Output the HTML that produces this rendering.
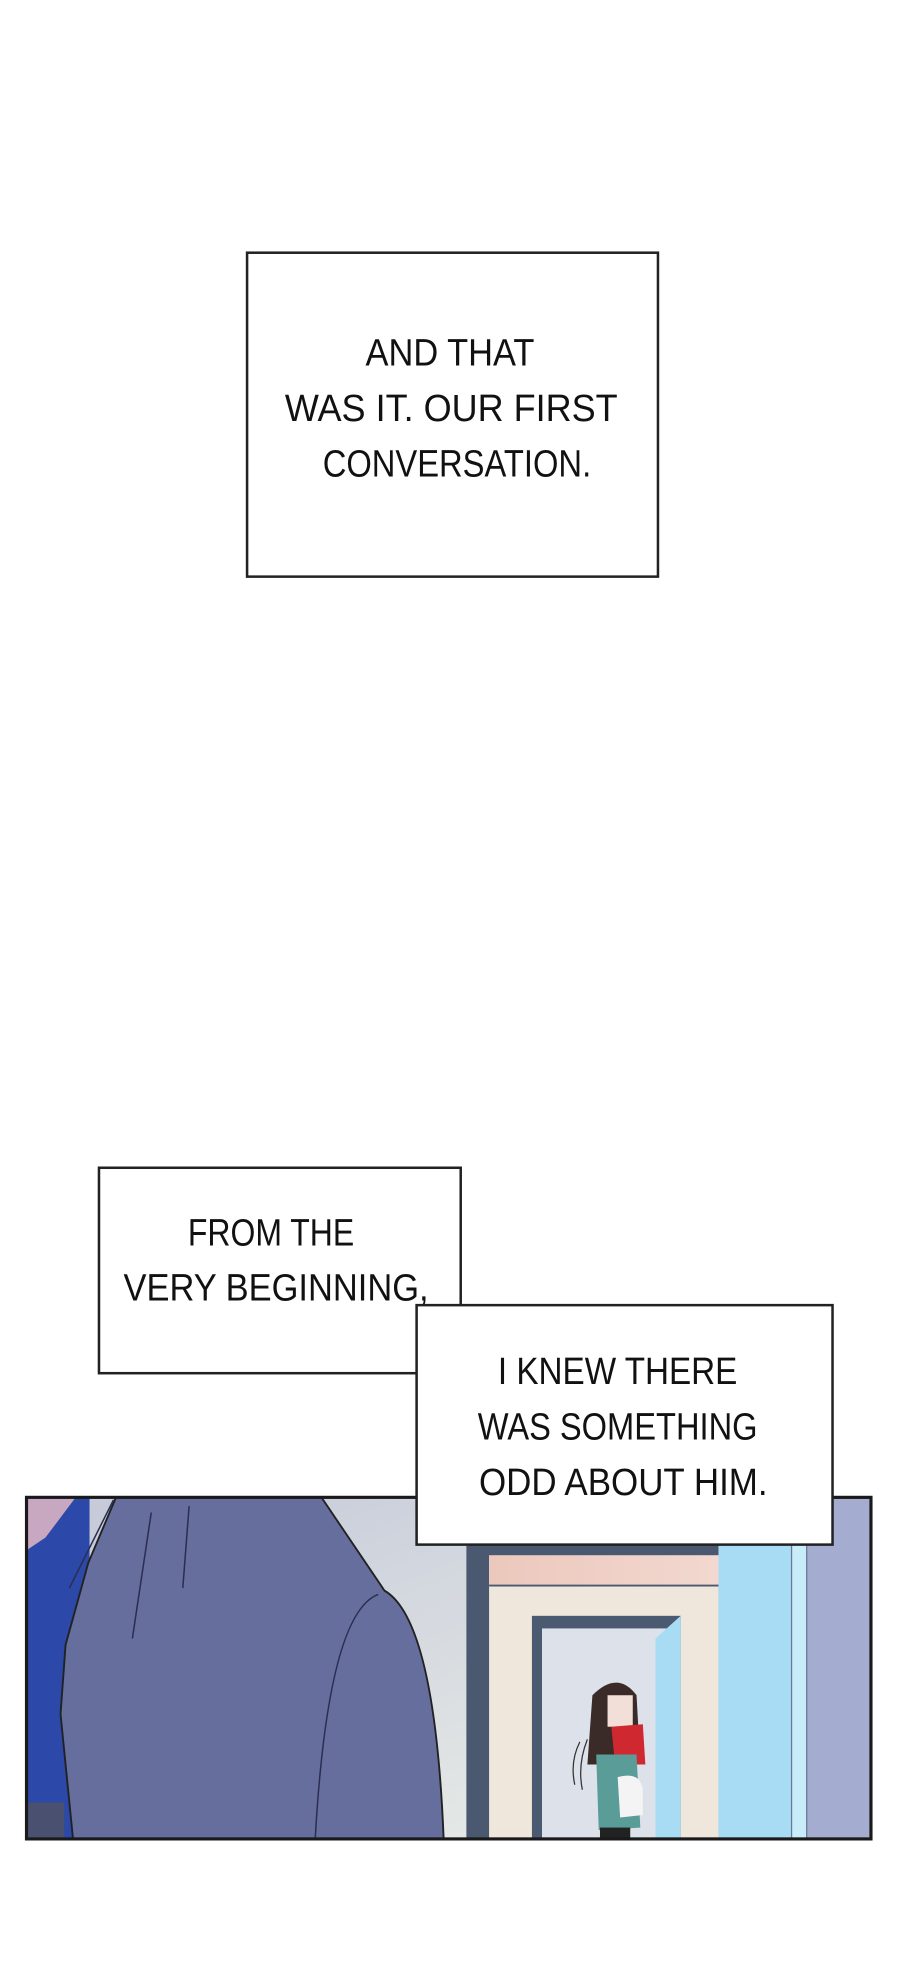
<!DOCTYPE html>
<html><head><meta charset="utf-8"><style>
html,body{margin:0;padding:0;background:#fff;}
svg{display:block;}
text{font-family:"Liberation Sans Narrow","Liberation Sans",sans-serif;font-size:30px;fill:#111;}
</style></head><body>
<svg width="900" height="1970" viewBox="0 0 714 1563" xmlns="http://www.w3.org/2000/svg">
<defs>
<linearGradient id="bg" x1="0" y1="0" x2="1" y2="1">
<stop offset="0" stop-color="#c4c8d8"/><stop offset="1" stop-color="#eef2ea"/></linearGradient>
<linearGradient id="pk" x1="0" y1="0" x2="1" y2="0">
<stop offset="0" stop-color="#ecc8bc"/><stop offset="1" stop-color="#f2d8d0"/></linearGradient>
<clipPath id="pc"><rect x="21" y="1188" width="670" height="271"/></clipPath>
</defs>
<rect width="714" height="1563" fill="#fff"/>
<!-- box 1 -->
<rect x="196" y="200.5" width="326" height="257" fill="#fff" stroke="#222" stroke-width="2"/>
<text x="290" y="290" textLength="134" lengthAdjust="spacingAndGlyphs">AND THAT</text>
<text x="226" y="334" textLength="264" lengthAdjust="spacingAndGlyphs">WAS IT. OUR FIRST</text>
<text x="256" y="378" textLength="213" lengthAdjust="spacingAndGlyphs">CONVERSATION.</text>
<!-- panel -->
<g clip-path="url(#pc)">
<rect x="21" y="1188" width="670" height="271" fill="url(#bg)"/>
<rect x="640" y="1188" width="52" height="272" fill="#a4acd0"/>
<rect x="570" y="1225" width="58" height="235" fill="#a8dcf4"/>
<rect x="628" y="1225" width="12" height="235" fill="#c8ecf8" stroke="#6a7890" stroke-width="1"/>
<rect x="370" y="1226" width="200" height="234" fill="#4a5870"/>
<rect x="388" y="1234" width="182" height="226" fill="#efe6dc"/>
<rect x="388" y="1234" width="182" height="24" fill="url(#pk)"/>
<line x1="388" y1="1258" x2="570" y2="1258" stroke="#4a5870" stroke-width="1.5"/>
<rect x="422" y="1282" width="118" height="178" fill="#4a5a70"/>
<rect x="430" y="1292" width="102" height="168" fill="#dde2ea"/>
<polygon points="520,1300 540,1282 540,1460 520,1460" fill="#a8dcf4"/>
<!-- girl -->
<path d="M470 1345 Q490 1325 505 1345 L508 1400 L466 1400 Z" fill="#3a2a28"/>
<rect x="482" y="1345" width="20" height="25" fill="#f2e0d8"/>
<path d="M485 1370 L510 1368 L512 1400 L488 1400Z" fill="#d02830"/>
<path d="M473 1392 L505 1392 L508 1450 L475 1452 Z" fill="#5a9c98"/>
<path d="M490 1410 Q508 1405 510 1420 L510 1440 L492 1442Z" fill="#f4f4f4"/>
<rect x="476" y="1450" width="24" height="10" fill="#222"/>
<path d="M466 1380 Q458 1400 462 1420 M460 1382 Q452 1398 456 1416" stroke="#333" stroke-width="1" fill="none"/>
<!-- shoulder -->
<rect x="21" y="1188" width="50" height="272" fill="#2c48a8"/>
<path d="M21 1188 L60 1188 L36 1220 L21 1230Z" fill="#c8a8c0"/>
<rect x="21" y="1430" width="30" height="30" fill="#4a5070"/>
<path d="M66 1188 L255 1188 L305 1262 Q345 1285 352 1460 L58 1460 L48 1360 L52 1305 L70 1240 L92 1188Z" fill="#666e9e" stroke="#222" stroke-width="1.5"/>
<path d="M120 1200 L105 1300 M150 1195 L145 1260 M300 1265 Q260 1280 250 1460 M90 1190 L55 1260" stroke="#2a2e50" stroke-width="1.2" fill="none"/>
</g>
<rect x="21" y="1188" width="670" height="271" fill="none" stroke="#1a1a1a" stroke-width="2.5"/>
<!-- box 2 -->
<rect x="78.5" y="926.5" width="287" height="163" fill="#fff" stroke="#222" stroke-width="2"/>
<text x="149" y="988" textLength="132" lengthAdjust="spacingAndGlyphs">FROM THE</text>
<text x="98" y="1032" textLength="242" lengthAdjust="spacingAndGlyphs">VERY BEGINNING,</text>
<!-- box 3 -->
<rect x="330.5" y="1035.5" width="330" height="190" fill="#fff" stroke="#222" stroke-width="2"/>
<text x="395" y="1098" textLength="190" lengthAdjust="spacingAndGlyphs">I KNEW THERE</text>
<text x="379" y="1142" textLength="222" lengthAdjust="spacingAndGlyphs">WAS SOMETHING</text>
<text x="380" y="1186" textLength="229" lengthAdjust="spacingAndGlyphs">ODD ABOUT HIM.</text>
</svg>
</body></html>
